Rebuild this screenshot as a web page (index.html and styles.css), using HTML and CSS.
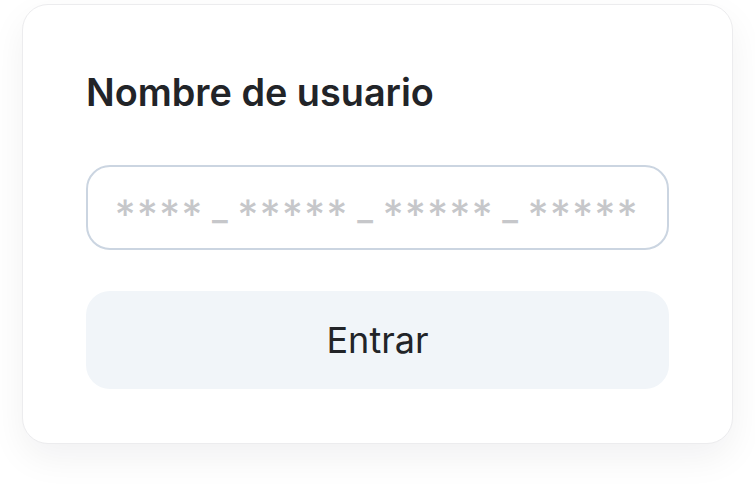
FILE: index.html
```html
<!DOCTYPE html>
<html lang="es">
<head>
<meta charset="utf-8">
<link rel="stylesheet" href="styles.css">
</head>
<body>
<div class="card">
  <h1 class="title">Nombre de usuario</h1>
  <input class="field" type="text" placeholder="**** _ ***** _ ***** _ *****">
  <button class="btn" type="button">Entrar</button>
</div>
</body>
</html>
```
FILE: styles.css
```css
html, body {
  margin: 0;
  padding: 0;
  background: #ffffff;
  font-family: Inter, "Liberation Sans", sans-serif;
}
body {
  padding: 4px 0 40px 22px;
}
.card {
  box-sizing: border-box;
  width: 711px;
  height: 440px;
  padding: 64px 63px 0 63px;
  background: #ffffff;
  border: 1px solid #ececee;
  border-radius: 26px;
  box-shadow: 0 14px 36px rgba(15, 23, 42, 0.06);
  display: flex;
  flex-direction: column;
}
.title {
  margin: 0;
  font-size: 37.8px;
  font-weight: 600;
  line-height: 46px;
  color: #222428;
}
.field {
  box-sizing: border-box;
  margin-top: 50px;
  width: 100%;
  height: 85px;
  border: 2px solid #cbd5e1;
  border-radius: 24px;
  padding: 0 20px 0 26px;
  font-family: inherit;
  font-size: 34px;
  font-weight: 500;
  font-feature-settings: "case" 1;
  color: #222;
  background: #fff;
  outline: none;
}
.field::placeholder {
  color: #c6c7ca;
}
.btn {
  margin-top: 41px;
  width: 100%;
  height: 98px;
  border: none;
  border-radius: 24px;
  background: #f1f5f9;
  font-family: inherit;
  font-size: 36px;
  font-weight: 400;
  color: #222428;
  cursor: pointer;
}
```
